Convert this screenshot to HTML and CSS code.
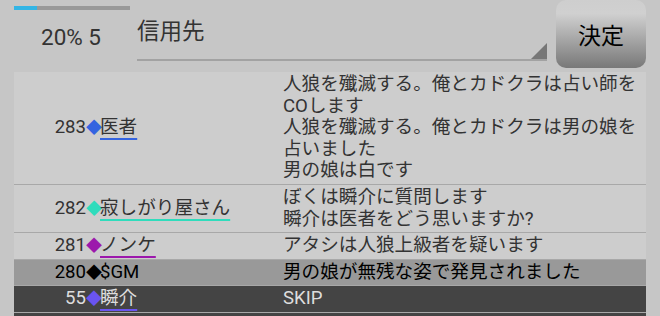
FILE: index.html
```html
<!DOCTYPE html>
<html lang="ja">
<head>
    <meta charset="UTF-8">
    <meta name="viewport" content="width=device-width, initial-scale=1.0">
    <title>人狼 - ログ</title>
    <link rel="stylesheet" href="styles.css">
</head>
<body>
    <div class="top">
        <div class="status">
            <div class="progress"><div class="progress-fill" style="width: 20%"></div></div>
            <div class="count">20% 5</div>
        </div>
        <div class="spinner">
            <span class="spinner-text">信用先</span>
            <span class="spinner-arrow"></span>
        </div>
        <button class="decide">決定</button>
    </div>
    <div class="log">
        <div class="row">
            <div class="who">
                <span class="num">283</span><span class="mark doctor">◆</span><span class="name doctor-line">医者</span>
            </div>
            <div class="msg">人狼を殲滅する。俺とカドクラは占い師をCOします<br>人狼を殲滅する。俺とカドクラは男の娘を占いました<br>男の娘は白です</div>
        </div>
        <div class="row">
            <div class="who">
                <span class="num">282</span><span class="mark lonely">◆</span><span class="name lonely-line">寂しがり屋さん</span>
            </div>
            <div class="msg">ぼくは瞬介に質問します<br>瞬介は医者をどう思いますか?</div>
        </div>
        <div class="row">
            <div class="who">
                <span class="num">281</span><span class="mark nonke">◆</span><span class="name nonke-line">ノンケ</span>
            </div>
            <div class="msg">アタシは人狼上級者を疑います</div>
        </div>
        <div class="row gm">
            <div class="who">
                <span class="num">280</span><span class="mark">◆</span><span class="name">$GM</span>
            </div>
            <div class="msg">男の娘が無残な姿で発見されました</div>
        </div>
        <div class="row dark">
            <div class="who">
                <span class="num">55</span><span class="mark shun">◆</span><span class="name shun-line">瞬介</span>
            </div>
            <div class="msg">SKIP</div>
        </div>
        <div class="row dark"></div>
    </div>
</body>
</html>
```

FILE: styles.css
```css
body {
    font-family: Roboto, "Noto Sans CJK JP", sans-serif;
    background: #c6c6c6;
    color: #333;
    margin: 0;
    padding: 0;
    overflow: hidden;
}
.top {
    display: flex;
    height: 72px;
}
.status {
    width: 116px;
    padding-left: 14px;
}
.progress {
    margin-top: 6px;
    height: 4px;
    background: #999;
}
.progress-fill {
    height: 100%;
    background: #33b5e5;
}
.count {
    margin-top: 14px;
    padding-left: 27px;
    font-size: 22.5px;
    line-height: 26px;
}
.spinner {
    flex: 1;
    position: relative;
    margin: 0 9px 0 7px;
    height: 59px;
    border-bottom: 2px solid #a2a2a2;
}
.spinner-text {
    display: block;
    margin-top: 17px;
    font-size: 22.5px;
    line-height: 28px;
}
.spinner-arrow {
    position: absolute;
    right: 0;
    bottom: 0;
    width: 0;
    height: 0;
    border-left: 16px solid transparent;
    border-bottom: 16px solid #777;
}
.decide {
    width: 90px;
    height: 68px;
    margin-right: 14px;
    border: none;
    border-radius: 10px;
    background: linear-gradient(#cecece, #d0d0d0 20%, #787878);
    font-family: Roboto, "Noto Sans CJK JP", sans-serif;
    font-size: 23px;
    color: #000;
    padding: 0;
}
.log {
    margin: 0 14px;
    background: #cdcdcd;
}
.row {
    display: flex;
    align-items: center;
    border-bottom: 1px solid #a8a8a8;
    font-size: 18.6px;
    line-height: 21.6px;
    padding: 2px 0;
    min-height: 21.6px;
}
.who {
    width: 269px;
    display: flex;
    align-items: baseline;
    flex-shrink: 0;
}
.num {
    width: 72px;
    text-align: right;
}
.mark {
    width: 14px;
    text-align: center;
    font-size: 16px;
}
.name {
    text-decoration-thickness: 2px;
    text-underline-offset: 5px;
}
.msg {
    flex: 1;
}
.doctor { color: #3464e0; }
.doctor-line { text-decoration: underline #3464e0; text-decoration-thickness: 2px; }
.lonely { color: #2fdcbc; }
.lonely-line { text-decoration: underline #2fdcbc; text-decoration-thickness: 2px; }
.nonke { color: #9c18ac; }
.nonke-line { text-decoration: underline #9c18ac; text-decoration-thickness: 2px; }
.shun { color: #6a54f0; }
.shun-line { text-decoration: underline #6a54f0; text-decoration-thickness: 2px; }
.gm {
    background: #999;
    color: #000;
}
.dark {
    background: #444;
    color: #ddd;
}
```
